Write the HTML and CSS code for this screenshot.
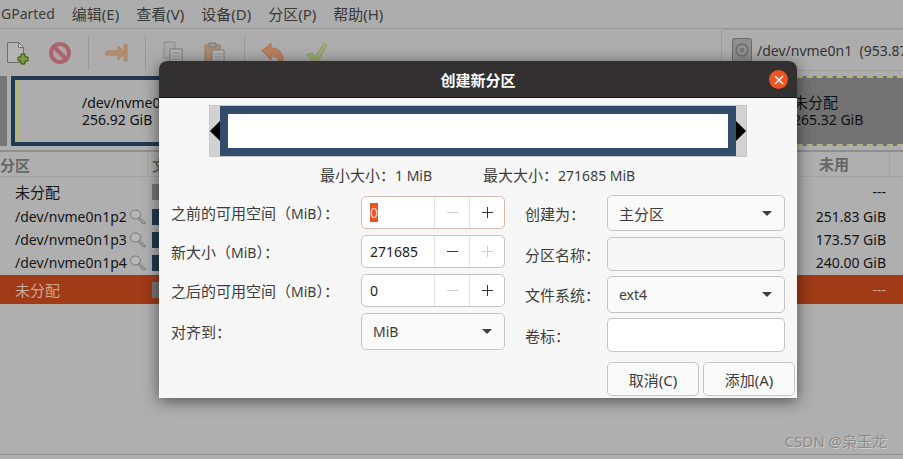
FILE: index.html
```html
<!DOCTYPE html>
<html lang="zh-CN">
<head>
    <meta charset="UTF-8">
    <meta name="viewport" content="width=device-width, initial-scale=1.0">
    <title>GParted</title>
    <link rel="stylesheet" href="styles.css">
</head>
<body>
    <div class="app">
        <div class="menubar">
            <span class="menu-title">GParted</span>
            <span>编辑(E)</span>
            <span>查看(V)</span>
            <span>设备(D)</span>
            <span>分区(P)</span>
            <span>帮助(H)</span>
        </div>

        <div class="toolbar">
            <div class="tool">
                <svg width="24" height="24" viewBox="0 0 24 24"><path d="M1.500 1.500h11l5 5v15h-16z" fill="#b4b4b4" stroke="#6f6f6f"/><path d="M12.500 1.500v5h5z" fill="#d0d0d0" stroke="#6f6f6f"/><path d="M15 13h4v3h3v4h-3v3h-4v-3h-3v-4h3z" fill="#7f9a3e" stroke="#34500f"/></svg>
            </div>
            <div class="tool">
                <svg width="24" height="24" viewBox="0 0 24 24"><circle cx="12" cy="12" r="9" fill="#b5a0a2" stroke="#a8656d" stroke-width="4"/><path d="M6 6l12 12" stroke="#a8656d" stroke-width="4"/></svg>
            </div>
            <i class="tool-sep"></i>
            <div class="tool">
                <svg width="24" height="24" viewBox="0 0 24 24"><path d="M1 10h12V5l7 7-7 7v-5H1z" fill="#b88e6c" stroke="#a98063"/><rect x="19" y="4" width="3" height="16" fill="#b88e6c" stroke="#a98063"/></svg>
            </div>
            <i class="tool-sep"></i>
            <div class="tool">
                <svg width="24" height="24" viewBox="0 0 24 24"><path d="M2 1h11v16H2z" fill="#a8a8a8" stroke="#8a8a8a"/><path d="M8 8h12v16H8z" fill="#b4b4b4" stroke="#7a7a7a"/><path d="M10 12h8M10 15h8M10 18h8M10 21h8" stroke="#8e8e8e"/></svg>
            </div>
            <div class="tool">
                <svg width="24" height="24" viewBox="0 0 24 24"><path d="M1 4h15v18H1z" fill="#a98c72" stroke="#927a63"/><path d="M5 2h7v4H5z" fill="#9a9a9a" stroke="#777"/><path d="M8 9h12v15H8z" fill="#b4b4b4" stroke="#7a7a7a"/><path d="M10 13h8M10 16h8M10 19h8" stroke="#8e8e8e"/></svg>
            </div>
            <i class="tool-sep"></i>
            <div class="tool">
                <svg width="24" height="24" viewBox="0 0 24 24"><path d="M1 10l9-8v5c7 0 12 4 12 12l-1 2-3-1c-1-4-4-5-8-5v4z" fill="#b8835f" stroke="#b0705a"/></svg>
            </div>
            <div class="tool tool-last">
                <svg width="24" height="24" viewBox="0 0 24 24"><path d="M2 14l5-2 3 4L19 2l3 2-10 18h-3z" fill="#9eaa72" stroke="#8c9a66"/></svg>
            </div>
            <div class="device">
                <svg width="20" height="24" viewBox="0 0 20 24"><rect x=".5" y=".5" width="19" height="23" rx="2" fill="#8f8f8f" stroke="#6a6a6a"/><circle cx="10" cy="12" r="6" fill="none" stroke="#6e6e6e" stroke-width="1.500"/><circle cx="10" cy="12" r="1.500" fill="none" stroke="#666"/></svg>
                <span>/dev/nvme0n1&nbsp; (953.87 GiB)</span>
            </div>
        </div>

        <div class="disk-map">
            <div class="part-small"></div>
            <div class="part-used">
                <i class="used-strip"></i>
                <div class="part-text">/dev/nvme0n1p2<br>256.92 GiB</div>
            </div>
            <div class="part-free">
                <div class="part-text"><span class="zh">未分配</span><br>265.32 GiB</div>
            </div>
        </div>

        <div class="table">
            <div class="table-head">
                <span class="col-name">分区</span>
                <span class="col-fs">文件系统</span>
                <span class="col-unused">未用</span>
            </div>
            <div class="table-row row-first">
                <span class="col-name zh">未分配</span>
                <span class="col-fs"><i class="fs-block fs-free"></i></span>
                <span class="col-unused">---</span>
            </div>
            <div class="table-row">
                <span class="col-name">/dev/nvme0n1p2
                    <svg class="key" width="17" height="16" viewBox="0 0 17 16"><ellipse cx="5.500" cy="5.500" rx="5" ry="4.500" fill="#b8b8b8" stroke="#777"/><path d="M9 8l7 6-2 1-2-1-1-2-3-2z" fill="#aaa" stroke="#777"/></svg>
                </span>
                <span class="col-fs"><i class="fs-block"></i></span>
                <span class="col-unused">251.83 GiB</span>
            </div>
            <div class="table-row">
                <span class="col-name">/dev/nvme0n1p3
                    <svg class="key" width="17" height="16" viewBox="0 0 17 16"><ellipse cx="5.500" cy="5.500" rx="5" ry="4.500" fill="#b8b8b8" stroke="#777"/><path d="M9 8l7 6-2 1-2-1-1-2-3-2z" fill="#aaa" stroke="#777"/></svg>
                </span>
                <span class="col-fs"><i class="fs-block"></i></span>
                <span class="col-unused">173.57 GiB</span>
            </div>
            <div class="table-row">
                <span class="col-name">/dev/nvme0n1p4
                    <svg class="key" width="17" height="16" viewBox="0 0 17 16"><ellipse cx="5.500" cy="5.500" rx="5" ry="4.500" fill="#b8b8b8" stroke="#777"/><path d="M9 8l7 6-2 1-2-1-1-2-3-2z" fill="#aaa" stroke="#777"/></svg>
                </span>
                <span class="col-fs"><i class="fs-block"></i></span>
                <span class="col-unused">240.00 GiB</span>
            </div>
            <div class="table-row row-selected">
                <span class="col-name zh">未分配</span>
                <span class="col-fs"><i class="fs-block fs-free"></i></span>
                <span class="col-unused">---</span>
            </div>
        </div>

        <div class="statusbar"></div>
    </div>

    <div class="dialog">
        <div class="dialog-title">
            <span>创建新分区</span>
            <button class="close-btn">
                <svg width="10" height="10" viewBox="0 0 10 10"><path d="M1 1l8 8M9 1l-8 8" stroke="#fff" stroke-width="1.500"/></svg>
            </button>
        </div>
        <div class="dialog-body">
            <div class="resizer">
                <i class="arrow-left"></i>
                <div class="resizer-bar"><div class="resizer-fill"></div></div>
                <i class="arrow-right"></i>
            </div>
            <div class="size-info">
                <span>最小大小：<small>1 MiB</small></span>
                <span>最大大小：<small>271685 MiB</small></span>
            </div>
            <div class="form">
                <div class="form-left">
                    <div class="field">
                        <label>之前的可用空间（<small>MiB</small>）：</label>
                        <div class="spin spin-focus">
                            <span class="spin-value"><mark>0</mark></span>
                            <span class="spin-btn minus off"></span>
                            <span class="spin-btn plus"></span>
                        </div>
                    </div>
                    <div class="field">
                        <label>新大小（<small>MiB</small>）：</label>
                        <div class="spin">
                            <span class="spin-value">271685</span>
                            <span class="spin-btn minus"></span>
                            <span class="spin-btn plus off"></span>
                        </div>
                    </div>
                    <div class="field">
                        <label>之后的可用空间（<small>MiB</small>）：</label>
                        <div class="spin">
                            <span class="spin-value">0</span>
                            <span class="spin-btn minus off"></span>
                            <span class="spin-btn plus"></span>
                        </div>
                    </div>
                    <div class="field">
                        <label>对齐到：</label>
                        <div class="combo combo-short"><span>MiB</span><i class="caret"></i></div>
                    </div>
                </div>
                <div class="form-right">
                    <div class="field">
                        <label>创建为：</label>
                        <div class="combo"><span class="zh">主分区</span><i class="caret"></i></div>
                    </div>
                    <div class="field field-name">
                        <label>分区名称：</label>
                        <div class="entry entry-off"></div>
                    </div>
                    <div class="field">
                        <label>文件系统：</label>
                        <div class="combo combo-tall"><span>ext4</span><i class="caret"></i></div>
                    </div>
                    <div class="field">
                        <label>卷标：</label>
                        <div class="entry"></div>
                    </div>
                </div>
            </div>
            <div class="dialog-actions">
                <button class="action-btn">取消(C)</button>
                <button class="action-btn">添加(A)</button>
            </div>
        </div>
    </div>

    <div class="watermark">CSDN @枭玉龙</div>
</body>
</html>
```

FILE: styles.css
```css
* {
    box-sizing: border-box;
}
html, body {
    margin: 0;
    height: 100%;
    overflow: hidden;
}
body {
    font-family: "Noto Sans", "Noto Sans CJK SC", sans-serif;
    font-size: 14px;
    background-color: #afafaf;
    color: #111;
    position: relative;
}
small {
    font-size: 14px;
}
.zh {
    font-size: 15px;
}
.app {
    height: 459px;
    display: flex;
    flex-direction: column;
    overflow: hidden;
}

/* menu */
.menubar {
    height: 29px;
    display: flex;
    align-items: center;
    gap: 17px;
    padding: 0 0 1px 1px;
    border-bottom: 1px solid #9a9a9a;
    color: #3a3a3a;
    font-size: 15px;
    background-color: #adadad;
    flex-shrink: 0;
    white-space: nowrap;
}
.menu-title {
    font-size: 14px;
}

/* toolbar */
.toolbar {
    height: 47px;
    display: flex;
    align-items: center;
    background-color: #adadad;
    flex-shrink: 0;
}
.tool {
    width: 36px;
    display: flex;
    justify-content: center;
}
.tool + .tool {
    margin-left: 6px;
}
.tool + .tool-last {
    margin-left: 8px;
}
.tool-sep {
    width: 1px;
    height: 34px;
    background-color: #999;
    margin: 0 10px;
}
.device {
    margin-left: auto;
    width: 182px;
    height: 42px;
    flex-shrink: 0;
    align-self: flex-start;
    display: flex;
    align-items: center;
    gap: 5px;
    padding: 0 0 0 10px;
    border: 1px solid #9d9d9d;
    border-right: none;
    border-radius: 5px 0 0 0;
    white-space: nowrap;
    overflow: hidden;
    color: #333;
}
.device svg {
    flex-shrink: 0;
}

/* disk map */
.disk-map {
    height: 76px;
    display: flex;
    gap: 4px;
    padding-bottom: 4px;
    border-bottom: 2px solid #8e8e8e;
    flex-shrink: 0;
}
.part-small {
    width: 7px;
    background-color: #777;
}
.part-used {
    width: 380px;
    border: 4px solid #1f3a52;
    background-color: #adadad;
    display: flex;
}
.used-strip {
    width: 5px;
    background-color: #b3b37e;
}
.part-text {
    line-height: 17px;
    margin: auto;
    white-space: nowrap;
}
.part-used .part-text {
    margin: auto 0 auto 62px;
}
.part-free {
    flex: 1;
    display: flex;
    align-items: center;
    background-color: #727272;
    border-top: 2px dashed #b3b37e;
    border-bottom: 2px dashed #b3b37e;
    padding-left: 398px;
}
.part-free .part-text {
    margin: 0;
}

/* table */
.table {
    flex: 1;
}
.table-head {
    height: 25px;
    display: flex;
    align-items: center;
    color: #666;
    font-size: 15px;
    font-weight: 700;
    border-bottom: 1px solid #a2a2a2;
    margin-bottom: 1px;
}
.table-row {
    height: 23px;
    display: flex;
    align-items: center;
    color: #151515;
}
.row-first {
    height: 27px;
}
.col-name {
    width: 148px;
    padding-left: 15px;
    display: flex;
    align-items: center;
    white-space: nowrap;
}
.table-head .col-name {
    padding-left: 0;
    border-right: 1px solid #a2a2a2;
    height: 100%;
}
.key {
    margin-left: 3px;
    flex-shrink: 0;
}
.col-fs {
    width: 600px;
    padding-left: 4px;
    white-space: nowrap;
}
.fs-block {
    display: block;
    width: 16px;
    height: 16px;
    background-color: #1f3a52;
}
.fs-free {
    background-color: #777;
}
.col-unused {
    width: 138px;
    text-align: right;
}
.table-head .col-unused {
    width: 142px;
    padding-left: 71px;
    text-align: left;
    border-right: 1px solid #a2a2a2;
    height: 100%;
    line-height: 25px;
}
.row-selected {
    height: 29px;
    margin-top: 1px;
    background-color: #a03a17;
    color: #c9a79b;
}

.statusbar {
    height: 5px;
    border-top: 1px solid #8f8f8f;
    flex-shrink: 0;
}

/* dialog */
.dialog {
    position: absolute;
    left: 159px;
    top: 61px;
    width: 638px;
    height: 337px;
    border-radius: 8px 8px 0 0;
    box-shadow: 0 3px 16px rgba(0, 0, 0, 0.55);
    display: flex;
    flex-direction: column;
    overflow: hidden;
    background-color: #f7f7f7;
    font-size: 15px;
}
.dialog-title {
    height: 37px;
    background-color: #323030;
    border-bottom: 1px solid #161616;
    color: #fff;
    font-weight: 700;
    display: flex;
    align-items: center;
    justify-content: center;
    position: relative;
    flex-shrink: 0;
}
.close-btn {
    position: absolute;
    right: 9px;
    top: 9px;
    width: 19px;
    height: 19px;
    padding: 0;
    border: none;
    border-radius: 50%;
    background-color: #ed5524;
    display: flex;
    align-items: center;
    justify-content: center;
}
.dialog-body {
    flex: 1;
    display: flex;
    flex-direction: column;
    color: #3d3d3d;
}

.resizer {
    width: 538px;
    height: 52px;
    margin: 7px 0 0 50px;
    display: flex;
    align-items: center;
    justify-content: space-between;
    background-color: #d2d2d2;
    border: 1px solid #c6c6c6;
    flex-shrink: 0;
    position: relative;
}
.resizer-bar {
    position: absolute;
    left: 10px;
    right: 10px;
    top: 0;
    bottom: 0;
    background-color: #324d6b;
    padding: 8px;
}
.resizer-fill {
    height: 34px;
    background-color: #fff;
}
.arrow-left, .arrow-right {
    width: 0;
    height: 0;
    border-top: 10px solid transparent;
    border-bottom: 10px solid transparent;
}
.arrow-left {
    border-right: 10px solid #000;
}
.arrow-right {
    border-left: 10px solid #000;
}

.size-info {
    display: flex;
    gap: 51px;
    padding-left: 161px;
    margin-top: 8px;
    height: 20px;
    line-height: 20px;
    white-space: nowrap;
}

.form {
    display: flex;
    margin-top: 11px;
    padding-left: 12px;
}
.form-left {
    width: 354px;
    display: flex;
    flex-direction: column;
    gap: 6px;
}
.form-right {
    flex: 1;
    display: flex;
    flex-direction: column;
    gap: 5px;
    margin-top: -1px;
}
.field {
    display: flex;
    align-items: center;
}
.field-name {
    margin-top: 1px;
}
.form-left label {
    width: 190px;
    white-space: nowrap;
}
.form-right label {
    width: 82px;
    white-space: nowrap;
}
.spin {
    width: 144px;
    height: 33px;
    display: flex;
    background-color: #fff;
    border: 1px solid #c4c4c4;
    border-radius: 5px;
    color: #222;
    font-size: 14px;
}
.spin-focus {
    border-color: #d8b8ae;
}
.spin-value {
    width: 72px;
    padding-left: 8px;
    line-height: 31px;
}
.spin-value mark {
    background-color: #e95420;
    color: #f7d7cc;
}
.spin-btn {
    --sign: #333;
    flex: 1;
    border-left: 1px solid #e4e4e4;
    background-repeat: no-repeat;
    background-position: center;
}
.spin-btn.off {
    --sign: #cfcfcf;
}
.minus {
    background-image: linear-gradient(var(--sign), var(--sign));
    background-size: 11px 1px;
}
.plus {
    background-image: linear-gradient(var(--sign), var(--sign)), linear-gradient(var(--sign), var(--sign));
    background-size: 11px 1px, 1px 11px;
}
.combo {
    width: 178px;
    height: 36px;
    display: flex;
    align-items: center;
    justify-content: space-between;
    padding: 0 12px 0 11px;
    background-color: #fafafa;
    border: 1px solid #c4c4c4;
    border-radius: 5px;
    font-size: 14px;
}
.combo-short {
    width: 144px;
    height: 37px;
}
.combo-tall {
    height: 37px;
}
.caret {
    width: 0;
    height: 0;
    border-left: 5px solid transparent;
    border-right: 5px solid transparent;
    border-top: 5px solid #3d3d3d;
}
.entry {
    width: 178px;
    height: 34px;
    background-color: #fff;
    border: 1px solid #c4c4c4;
    border-radius: 5px;
}
.entry-off {
    background-color: #f7f7f7;
}
.dialog-actions {
    position: absolute;
    right: 2px;
    bottom: 2px;
    display: flex;
    gap: 4px;
}
.action-btn {
    width: 92px;
    height: 34px;
    padding: 0;
    font-family: inherit;
    font-size: 15px;
    color: #3d3d3d;
    background-color: #fafafa;
    border: 1px solid #c4c4c4;
    border-radius: 5px;
}

.watermark {
    position: absolute;
    right: 16px;
    bottom: 8px;
    font-size: 15px;
    color: #8c8c8c;
    text-shadow: 1px 1px 0 #cdcdcd;
}
```
